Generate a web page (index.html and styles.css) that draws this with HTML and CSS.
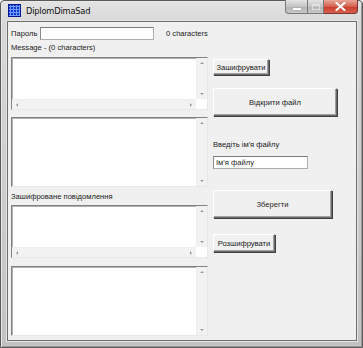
FILE: index.html
```html
<!DOCTYPE html>
<html>
<head>
<meta charset="utf-8">
<link rel="stylesheet" href="styles.css">
</head>
<body>
<div class="window">
  <div class="titlebar">
    <div class="appicon"></div>
    <div class="title">DiplomDimaSad</div>
    <div class="controls">
      <div class="ctl min"><span class="minbar"></span></div>
      <div class="ctl max"><span class="maxbox"></span></div>
      <div class="ctl close">
        <svg width="11" height="9" viewBox="0 0 11 9"><path d="M1.5 1 L9.5 8 M9.5 1 L1.5 8" stroke="#fff" stroke-width="2.2" stroke-linecap="round"/></svg>
      </div>
    </div>
  </div>
  <div class="client">
    <div class="leftcol">
      <div class="pwrow">
        <span class="lbl pwlbl">Пароль</span>
        <div class="input pwinput"></div>
        <span class="lbl count">0 characters</span>
      </div>
      <div class="lbl msglbl">Message - (0 characters)</div>
      <div class="box short">
        <div class="area">
          <div class="content"></div>
          <div class="vscroll"><span class="arr up"></span><span class="arr down"></span></div>
        </div>
        <div class="hscroll"><span class="arr left"></span><span class="arr right"></span></div>
      </div>
      <div class="box tall">
        <div class="area">
          <div class="content"></div>
          <div class="vscroll"><span class="arr up"></span><span class="arr down"></span></div>
        </div>
      </div>
      <div class="lbl enclbl">Зашифроване повідомлення</div>
      <div class="box short">
        <div class="area">
          <div class="content"></div>
          <div class="vscroll"><span class="arr up"></span><span class="arr down"></span></div>
        </div>
        <div class="hscroll"><span class="arr left"></span><span class="arr right"></span></div>
      </div>
      <div class="box tall last">
        <div class="area">
          <div class="content"></div>
          <div class="vscroll"><span class="arr up"></span><span class="arr down"></span></div>
        </div>
      </div>
    </div>
    <div class="rightcol">
      <div class="btn btn-encrypt">Зашифрувати</div>
      <div class="btn btn-open">Відкрити файл</div>
      <div class="lbl fnlbl">Введіть ім'я файлу</div>
      <div class="input fninput">Ім'я файлу</div>
      <div class="btn btn-save">Зберегти</div>
      <div class="btn btn-decrypt">Розшифрувати</div>
    </div>
  </div>
</div>
</body>
</html>
```
FILE: styles.css
```css
* { box-sizing: border-box; }
html, body { margin: 0; padding: 0; background: #fff; }
body { width: 363px; height: 348px; overflow: hidden; font-family: "Liberation Sans", Arial, sans-serif; }

.window {
  width: 363px; height: 348px;
  background: linear-gradient(to bottom, #e4e4e4 0px, #d8d8d8 20px, #c2c2c2 100%);
  border: 1px solid #5a5a5a;
  box-shadow: inset 1px 1px 0 #e8e8e8, inset -1px -1px 0 #9a9a9a;
  border-radius: 4px 4px 0 0;
  display: flex; flex-direction: column;
  padding: 0 5px 6px 6px;
}

.titlebar {
  height: 20px; flex: none;
  display: flex; align-items: flex-start;
}
.appicon {
  width: 13px; height: 13px; margin: 3px 0 0 1px;
  background: #1a2fd0;
  background-image: radial-gradient(#6aa0ff 1px, transparent 1.2px);
  background-size: 3px 3px;
  border: 1px solid #0a1590;
}
.title { font-size: 8.3px; color: #111; margin: 5px 0 0 5px; font-family: "DejaVu Sans", "Liberation Sans", sans-serif; letter-spacing: -0.2px; }
.controls { margin-left: auto; display: flex; margin-right: -1px; margin-top: -1px; }
.ctl {
  height: 14px; display: flex; align-items: center; justify-content: center;
  border: 1px solid #7a7a7a; border-top: none;
}
.min { width: 22px; border-radius: 0 0 0 4px; background: linear-gradient(#e4e4e4, #c4c4c4 50%, #b4b4b4 51%, #c8c8c8); border-right: none; }
.max { width: 17px; background: linear-gradient(#e4e4e4, #c4c4c4 50%, #b4b4b4 51%, #c8c8c8); }
.close { width: 34px; border-radius: 0 0 4px 0; background: linear-gradient(#e8a898, #d46050 50%, #c83a28 51%, #d86050); border-color: #7a3530; border-left: none; }
.minbar { width: 8px; height: 2px; background: #fff; margin-top: 4px; box-shadow: 0 0 1px #666; }
.maxbox { width: 8px; height: 6px; border: 1px solid #f4f4f4; border-top-width: 2px; opacity: 0.6; }

.client {
  flex: 1;
  background: #f0f0f0;
  border: 1px solid #6e6e6e;
  box-shadow: 0 0 0 1px #e6e6e6;
  display: flex;
  padding: 0 0 0 3px;
}
.lbl { font-size: 7.6px; color: #1a1a1a; line-height: 10px; white-space: nowrap; }

.leftcol { width: 197px; display: flex; flex-direction: column; padding-top: 5px; }
.pwrow { display: flex; align-items: center; height: 13px; }
.pwlbl { width: 29px; }
.input {
  background: #fff; border: 1px solid #abadb3; border-top-color: #7a7a7a; border-left-color: #8a8a8a;
}
.pwinput { width: 114px; height: 13px; }
.count { margin-left: 12px; }
.msglbl { margin-top: 3px; }

.box {
  background: #fff;
  border: 1px solid; border-color: #828282 #e8e8e8 #e8e8e8 #828282;
  box-shadow: inset 1px 1px 0 #b0b0b0;
  display: flex; flex-direction: column;
  margin-top: 4px;
}
.box.short { height: 53px; }
.box.tall { height: 70px; margin-top: 7px; }
.box.last { margin-top: 8px; }
.area { flex: 1; display: flex; }
.content { flex: 1; }
.vscroll {
  width: 11px; background: #f2f2f2;
  display: flex; flex-direction: column; justify-content: space-between; align-items: center;
  padding: 4px 0 4px;
  border-left: 1px solid #ececec;
}
.hscroll {
  height: 10px; background: #f2f2f2; margin-right: 11px;
  display: flex; justify-content: space-between; align-items: center;
  padding: 0 4px;
  border-top: 1px solid #ececec;
}
.arr { width: 0; height: 0; border: 2px solid transparent; }
.up { border-bottom: 2.5px solid #9a9a9a; border-top-width: 0; }
.down { border-top: 2.5px solid #9a9a9a; border-bottom-width: 0; }
.left { border-right: 2.5px solid #9a9a9a; border-left-width: 0; }
.right { border-left: 2.5px solid #9a9a9a; border-right-width: 0; }

.enclbl { margin-top: 5px; }
.enclbl + .box { margin-top: 3px; }

.rightcol { display: flex; flex-direction: column; align-items: flex-start; padding-left: 5px; padding-top: 37px; }
.btn {
  background: #f0f0f0;
  border: 1px solid; border-color: #fff #6a6a6a #6a6a6a #fff;
  box-shadow: inset -1px -1px 0 #a0a0a0, 1px 1px 0 #404040;
  font-size: 7.6px; color: #1a1a1a;
  display: flex; align-items: center; justify-content: center;
  white-space: nowrap;
}
.btn-encrypt { width: 56px; height: 16px; }
.btn-open { width: 124px; height: 28px; margin-top: 13px; }
.fnlbl { margin-top: 24px; }
.fninput { width: 95px; height: 13px; margin-top: 6px; font-size: 7.6px; line-height: 11px; padding-left: 2px; color: #1a1a1a; }
.btn-save { width: 119px; height: 28px; margin-top: 21px; }
.btn-decrypt { width: 62px; height: 18px; margin-top: 16px; }
```
